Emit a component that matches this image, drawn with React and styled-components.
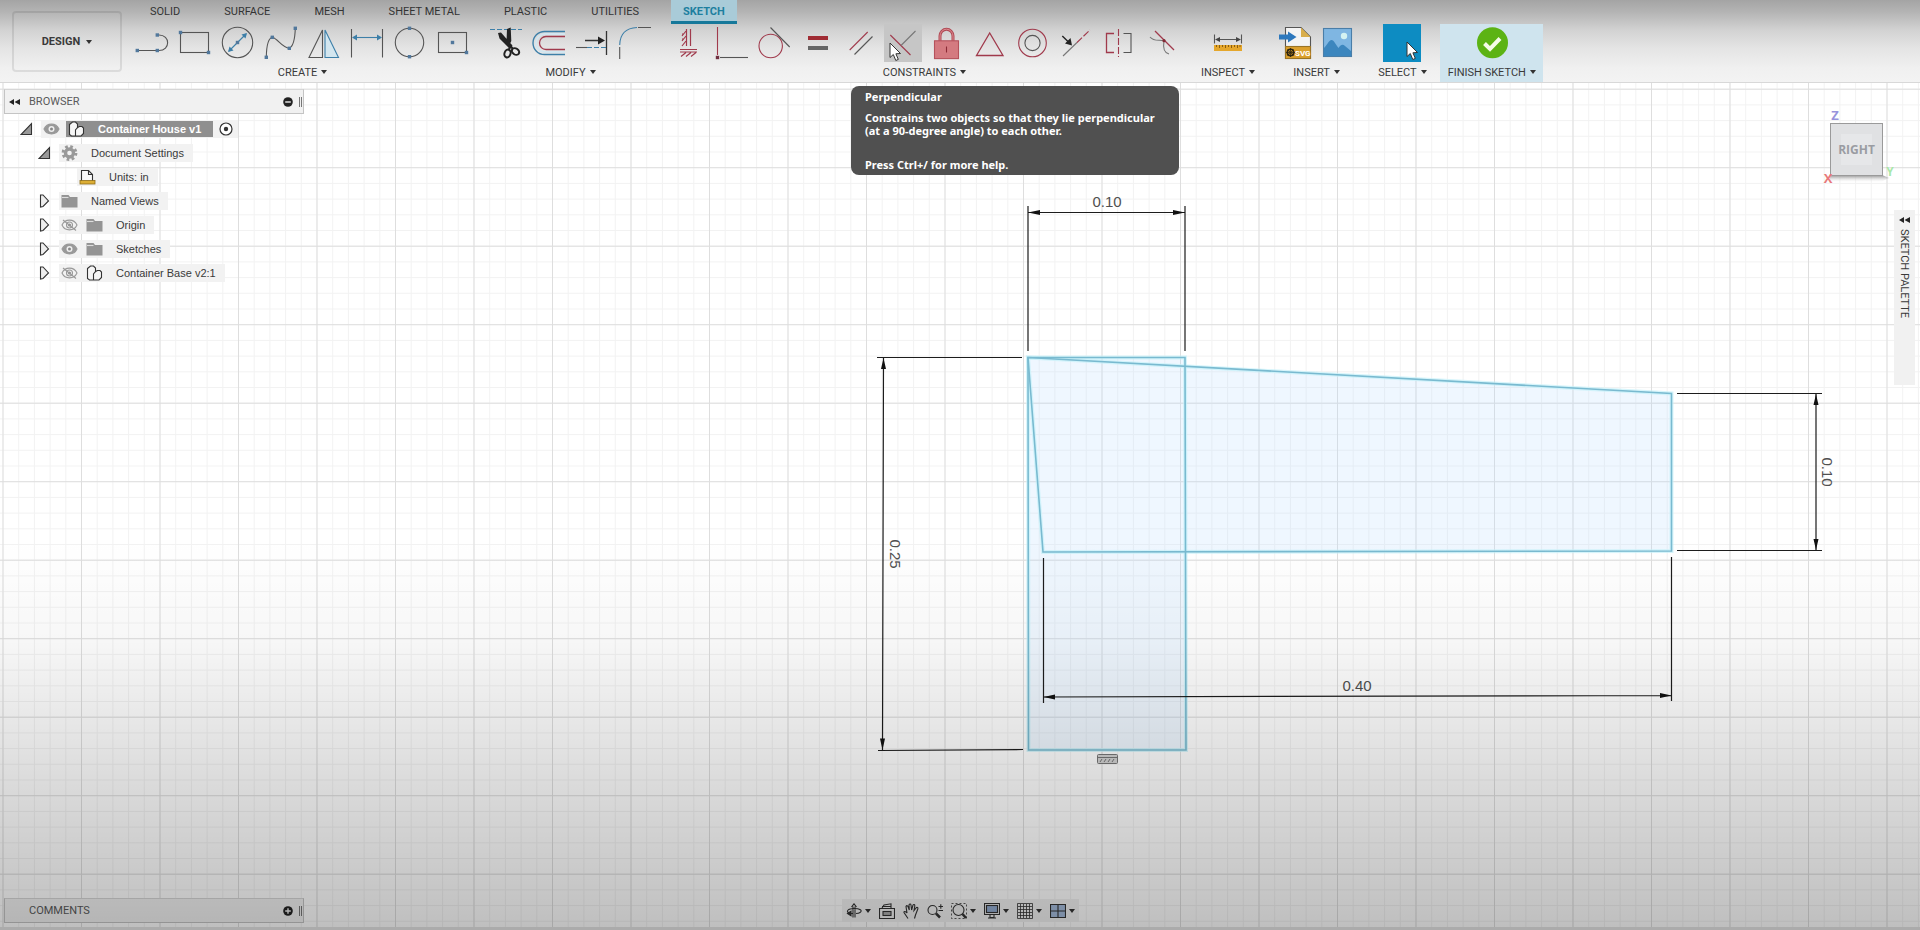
import React from "react";
import styled, { createGlobalStyle } from "styled-components";

const GlobalStyle = createGlobalStyle`
  * {
    box-sizing: border-box;
  }
  body {
    margin: 0;
    background: #ffffff;
    font-family: Roboto, "Liberation Sans", sans-serif;
    font-size: 11px;
    color: #3a3a3a;
  }
  button {
    font: inherit;
    color: inherit;
    background: none;
    border: 0;
    padding: 0;
    cursor: pointer;
  }
  svg {
    display: block;
  }
`;

const Page = styled.div`
  height: 100vh;
  display: flex;
  flex-direction: column;
  overflow: hidden;
`;

/* ---------- header ---------- */

const Header = styled.header`
  display: flex;
  padding-left: 12px;
  border-bottom: 1px solid #d8d8d8;
  background: linear-gradient(#a4a4a4 0, #b4b4b4 12px, #d2d2d2 30px, #e4e4e4 48px, #f0f0f0 68px, #f3f3f3 100%);
`;

const DesignButton = styled.button`
  width: 110px;
  height: 61px;
  margin-top: 11px;
  border: 2px solid rgba(0, 0, 0, 0.09);
  border-radius: 4px;
  display: flex;
  align-items: center;
  justify-content: center;
  gap: 6px;
  font-weight: 700;
`;

const Ribbon = styled.div`
  flex: 1;
  min-width: 0;
  padding-left: 4px;
`;

const Tabs = styled.nav`
  display: flex;
  gap: 20px;
  height: 24px;
  padding-left: 12px;
`;

const Tab = styled.button`
  padding: 2px 12px 0;
  white-space: nowrap;
  color: ${(p) => (p.$active ? "#1d7f9f" : "#333333")};
  font-weight: ${(p) => (p.$active ? 700 : 400)};
  background: ${(p) => (p.$active ? "#a9cbd8" : "none")};
  border-bottom: ${(p) => (p.$active ? "3px solid #16789a" : "3px solid transparent")};
`;

const Groups = styled.div`
  display: flex;
`;

const Group = styled.div`
  display: flex;
  flex-direction: column;
  align-items: center;
  padding: 0 ${(p) => p.$pad || 7}px;
  background: ${(p) => (p.$done ? "#cfe4ee" : "none")};
  & + & {
    border-left: 1px solid ${(p) => (p.$done ? "transparent" : "#cccccc")};
  }
`;

const Tools = styled.div`
  display: flex;
  gap: 5px;
`;

const Tool = styled.button`
  position: relative;
  width: 38px;
  height: 38px;
  background: ${(p) => (p.$fill ? p.$fill : "none")};
`;

const GroupLabel = styled.button`
  display: flex;
  align-items: center;
  gap: 4px;
  height: 20px;
  white-space: nowrap;
`;

const Caret = styled.span`
  border: 3px solid transparent;
  border-top: 4px solid #333333;
  border-bottom: 0;
`;

const Tooltip = styled.div`
  position: absolute;
  z-index: 5;
  top: 62px;
  left: -33px;
  width: 328px;
  height: 89px;
  padding: 4px 14px;
  border-radius: 8px;
  background: #505050;
  color: #ffffff;
  font: 700 11px/13px "Noto Sans", sans-serif;
  text-align: left;
  white-space: nowrap;
  p {
    margin: 0;
  }
  p + p {
    margin-top: 8px;
  }
  p:last-child {
    margin-top: 21px;
  }
`;

const Pointer = styled.svg`
  position: absolute;
  left: ${(p) => p.$x}px;
  top: ${(p) => p.$y}px;
`;

/* ---------- workspace ---------- */

const Workspace = styled.main`
  position: relative;
  flex: 1;
  min-height: 0;
  display: flex;
  flex-direction: column;
  justify-content: space-between;
  border-bottom: 3px solid #ababab;
`;

const Canvas = styled.svg`
  position: absolute;
  inset: 0;
  width: 100%;
  height: 100%;
`;

const Shade = styled.div`
  position: absolute;
  inset: 0;
  pointer-events: none;
  background: linear-gradient(
    transparent 54%,
    rgba(0, 0, 0, 0.03) 66%,
    rgba(0, 0, 0, 0.09) 75%,
    rgba(0, 0, 0, 0.15) 84%,
    rgba(0, 0, 0, 0.21) 94%,
    rgba(0, 0, 0, 0.25) 100%
  );
`;

const TopArea = styled.div`
  position: relative;
  display: flex;
  justify-content: space-between;
  padding: 6px 5px 0 4px;
`;

const Panel = styled.section`
  width: 300px;
`;

const PanelBar = styled.div`
  display: flex;
  align-items: center;
  height: 25px;
  padding: 0 1px 0 4px;
  background: #f1f1f1;
  border: 1px solid #c4c4c4;
  border-top-color: #d6d6d6;
  color: #5a5a5a;
`;

const PanelTitle = styled.h2`
  flex: 1;
  margin: 0;
  padding-left: ${(p) => p.$indent}px;
  font-size: 11px;
  font-weight: 400;
`;

const Grip = styled.span`
  width: 3px;
  height: 10px;
  margin-left: 6px;
  border-left: 1px solid #777777;
  border-right: 1px solid #777777;
`;

const Tree = styled.ul`
  list-style: none;
  margin: 3px 0 0;
  padding: 0;
  font-family: "Liberation Sans", sans-serif;
`;

const TreeRow = styled.li`
  display: flex;
  align-items: center;
  gap: 8px;
  height: 24px;
  padding-left: ${(p) => p.$indent}px;
`;

const Chip = styled.div`
  display: flex;
  align-items: center;
  gap: ${(p) => (p.$root ? 6 : 8)}px;
  height: 18px;
  padding: 0 ${(p) => (p.$root ? 5 : 9)}px 0 2px;
  background: #f2f2f2;
`;

const RowLabel = styled.span`
  padding-left: 5px;
  white-space: nowrap;
`;

const Selected = styled.span`
  display: flex;
  align-items: center;
  gap: 8px;
  height: 16px;
  padding: 0 12px 0 2px;
  background: #8f8f8f;
  color: #ffffff;
  font-weight: 700;
`;

const Side = styled.div`
  display: flex;
  align-items: flex-start;
  padding-top: 17px;
`;

const Palette = styled.button`
  display: flex;
  align-items: center;
  gap: 6px;
  width: 21px;
  height: 175px;
  margin-top: 104px;
  padding-top: 7px;
  writing-mode: vertical-rl;
  background: #f1f1f1;
`;

const BottomArea = styled.div`
  position: relative;
  display: grid;
  grid-template-columns: 1fr auto 1fr;
  align-items: center;
  padding: 0 4px 4px;
`;

const NavBar = styled.div`
  display: flex;
  align-items: center;
  gap: 8px;
  height: 23px;
  padding: 0 4px;
  background: #f1f1f1;
`;

const NavButton = styled.button`
  display: flex;
  align-items: center;
  gap: 3px;
`;

/* ---------- drawing helpers ---------- */

const INK = "#555555";
const BLUE = "#3d7fa8";
const RED = "#a03a4c";

const Dot = ({ x, y, fill = "#52789c" }) => (
  <rect x={x - 1.7} y={y - 1.7} width="3.4" height="3.4" fill={fill} />
);

const Glyph = ({ children }) => (
  <svg width="38" height="38" viewBox="0 0 38 38" fill="none" stroke={INK} strokeWidth="1.1" aria-hidden="true">
    {children}
  </svg>
);

const createTools = [
  ["Line", <>
    <path d="M4.3 26.5H24.3M26 11C37.5 11 37.5 26.5 26 26.5" />
    <g stroke="none"><Dot x={4.3} y={26.5} /><Dot x={24.3} y={26.5} /><Dot x={24.3} y={11} /></g>
  </>],
  ["Rectangle", <>
    <rect x="4.5" y="8.5" width="28" height="20" />
    <g stroke="none"><Dot x={4.5} y={8.5} /><Dot x={32.5} y={28.5} /></g>
  </>],
  ["Circle", <>
    <circle cx="18.5" cy="18.5" r="15.2" />
    <g stroke={BLUE} fill={BLUE}>
      <path d="M10 27L27 10" />
      <path d="M9 28L10.5 22.5L14.5 26.5ZM28 9L22.5 10.5L26.5 14.5Z" stroke="none" />
    </g>
    <g stroke="none"><Dot x={18.5} y={18.5} /></g>
  </>],
  ["Spline", <>
    <path d="M4.3 33C4.5 23 6.5 14 10.5 13.3C16 15 20 23.5 27.3 24.3C32 22 33 14 33.3 4.3" />
    <g stroke="none"><Dot x={4.3} y={33.3} /><Dot x={10.3} y={13.3} /><Dot x={27.3} y={24.3} /><Dot x={33.3} y={4.3} /></g>
  </>],
  ["Mirror", <>
    <path d="M17.5 6V33.5H4Z" />
    <path d="M20 6V33.5H33.5Z" stroke={BLUE} fill="#d3e6ef" />
  </>],
  ["Sketch Dimension", <>
    <path d="M3.5 5V33.5M34.5 5V33.5" />
    <path d="M5 13.5H33" stroke={BLUE} />
    <path d="M4 13.5L9 10.5V16.5ZM34 13.5L29 10.5V16.5Z" fill={BLUE} stroke="none" />
  </>],
  ["2-Point Circle", <>
    <circle cx="18.5" cy="18.5" r="14.2" />
    <g stroke="none"><Dot x={18.5} y={4.3} /><Dot x={18.5} y={32.7} /></g>
  </>],
  ["Center Rectangle", <>
    <rect x="4.5" y="8.5" width="28" height="20" />
    <g stroke="none"><Dot x={18.5} y={18.5} /><Dot x={32.5} y={28.5} /></g>
  </>],
];

const modifyTools = [
  ["Trim", <>
    <path d="M3 5.5H35" stroke={BLUE} strokeDasharray="5 2" />
    <path d="M11 9L14 8.5L25.5 21.5L22.5 24.5L12.5 14.5ZM20 5L23.7 3.5L24.3 17L21.5 23L19.5 18Z" fill="#222222" stroke="none" />
    <g stroke="#222222" strokeWidth="2">
      <ellipse cx="20.5" cy="29.5" rx="3" ry="4" transform="rotate(20 20.5 29.5)" />
      <ellipse cx="28.5" cy="27.5" rx="3" ry="4" transform="rotate(-55 28.5 27.5)" />
      <path d="M22 25.5L23.5 22L26 25" />
    </g>
  </>],
  ["Offset", <>
    <path d="M35 10H15A9 9 0 0 0 15 28H35" stroke="#d2e6f0" strokeWidth="2" />
    <path d="M35 7.5H14.5A11.5 11.5 0 0 0 14.5 30.5H35" stroke={BLUE} strokeWidth="1.4" />
    <path d="M35 12.5H16A6.5 6.5 0 0 0 16 25.5H35" stroke={RED} strokeWidth="1.3" />
  </>],
  ["Extend", <>
    <path d="M33.5 7V31M12 16.5H28" stroke="#333333" strokeWidth="1.3" />
    <path d="M32 16.5L25 12.5V20.5Z" fill="#222222" stroke="none" />
    <path d="M3 23.5H14" />
    <path d="M14 23.5H33" stroke={BLUE} strokeDasharray="5 2" />
  </>],
  ["Fillet", <>
    <path d="M3.7 35V23M22 3.5H35" />
    <path d="M3.7 21C4 10 10 4 21 3.5" stroke={BLUE} />
  </>],
];

const constraintTools = [
  ["Horizontal/Vertical", <g stroke={RED} strokeWidth="1.2">
    <path d="M17.5 5V22M21.5 5V22M17 7L13 12M17 12L13 17M17 17L13 22M13 10H15M13 15H15" />
    <path d="M11 25.5H28M11 28H28M17 28.5L12 32.5M22 28.5L17 32.5M27 28.5L22 32.5" />
  </g>],
  ["Coincident", <>
    <path d="M5.5 3V31" stroke={RED} />
    <path d="M8 33.5H36" />
    <g stroke="none"><Dot x={5.5} y={33.5} fill="#703040" /></g>
  </>],
  ["Tangent", <>
    <circle cx="15.7" cy="22" r="11.7" stroke={RED} />
    <path d="M15.5 3.5L34.7 23" />
  </>],
  ["Equal", <g stroke="none">
    <rect x="10" y="12" width="20" height="4" fill="#a02c34" />
    <rect x="10" y="22" width="20" height="4" fill="#666666" />
  </g>],
  ["Parallel", <>
    <path d="M8.7 26L26.7 8" stroke={RED} />
    <path d="M13.5 30.5L31.5 12.5" />
  </>],
  ["Perpendicular", <>
    <path d="M6.3 11L26.5 31" stroke={RED} />
    <path d="M17 21.5L31.5 7" stroke="#777777" />
  </>],
  ["Fix/UnFix", <>
    <path d="M13 17V12A6.5 6.8 0 0 1 26 12V17" stroke="#b04a55" strokeWidth="3" />
    <path d="M13 17V12A6.5 6.8 0 0 1 26 12V17" stroke="#dd8b90" strokeWidth="1" />
    <rect x="7.5" y="16.8" width="24" height="17.8" fill="#d47a80" stroke="#b5525c" />
    <path d="M19.5 22.5V28.5" stroke="#8a2a35" />
  </>],
  ["Midpoint Triangle", <path d="M6.5 31.5H33L19.7 9Z" stroke={RED} strokeWidth="1.3" />],
  ["Concentric", <>
    <circle cx="19.5" cy="19" r="13.8" stroke={RED} />
    <circle cx="19.5" cy="19" r="7.6" />
  </>],
  ["Midpoint", <>
    <path d="M7 32L21 18.5" stroke="#777777" />
    <path d="M21 18.5L34 6" stroke={RED} strokeDasharray="7 2" />
    <path d="M6.3 12L12 17.5" stroke="#222222" strokeWidth="1.4" />
    <path d="M16 21.5L14.5 14L9 19.5Z" fill="#222222" stroke="none" />
  </>],
  ["Symmetry", <>
    <path d="M15 9.5H7.5V28.5H15" stroke={RED} strokeWidth="1.3" />
    <path d="M19.5 5V33" stroke={RED} strokeDasharray="7 2" />
    <path d="M24.5 9.5H32V28.5H24.5" />
  </>],
  ["Curvature", <>
    <path d="M13 7L32 26" stroke={RED} strokeWidth="1.3" />
    <path d="M8 13C12 18 17 15.5 22 16.7C21 23 22 29 27 30" stroke="#777777" />
    <circle cx="22" cy="16.7" r="1.6" fill="#802a35" stroke="none" />
  </>],
];

const inspectTools = [
  ["Measure", <>
    <path d="M5.5 10.5V19.5M32.5 10.5V19.5M7 15.5H31" />
    <path d="M6 15.5L11 13V18ZM32 15.5L27 13V18Z" fill="#444444" stroke="none" />
    <rect x="5" y="21" width="28" height="6" fill="#e5a72c" stroke="none" />
    <path d="M7.5 21V23M10.5 21V24M13.5 21V23M16.5 21V24M19.5 21V23M22.5 21V24M25.5 21V23M28.5 21V24M31 21V23" stroke="#8a5d10" strokeWidth="1" />
  </>],
];

const insertTools = [
  ["Insert SVG", <>
    <path d="M9.5 3.5H25L34.5 13V34.5H9.5Z" fill="#f4f4f4" />
    <path d="M25 3.5V13H34.5Z" fill="#d9ae4c" stroke="none" />
    <rect x="9.5" y="22.5" width="25" height="12" fill="#dca02c" stroke="#9a7426" />
    <path d="M3 10.5H12V7.5L20.5 13L12 18.5V15.5H3Z" fill="#2d78bd" stroke="none" />
    <circle cx="14.5" cy="28.5" r="3.2" stroke="#2b2310" strokeWidth="1.6" />
    <path d="M14.5 24V33M10 28.5H19M11.5 25.5L17.5 31.5M17.5 25.5L11.5 31.5" stroke="#2b2310" strokeWidth="0.8" />
    <text x="19" y="31.5" fontFamily="Roboto, sans-serif" fontSize="8" fontWeight="700" fill="#ffffff" stroke="none">SVG</text>
  </>],
  ["Canvas", <>
    <rect x="4.5" y="4.5" width="28" height="28" fill="#7fb6e2" stroke="#4a7ea8" />
    <path d="M5 24C9 20 10 16 12.5 16C15 16 17 21 19.5 24C22 20 24 20 26 22L32 27V32H5Z" fill="#3c86be" stroke="none" />
    <circle cx="25" cy="12" r="3.2" fill="#d4f2f2" stroke="none" />
  </>],
];

const finishTools = [
  ["Finish Sketch", <>
    <circle cx="19.5" cy="18.7" r="15.5" fill="#5cb314" stroke="none" />
    <path d="M11.5 19.5L17 25L27 14.5" stroke="#f4fbe8" strokeWidth="4" />
  </>],
];

const groups = [
  { label: "CREATE", tools: createTools },
  { label: "MODIFY", tools: modifyTools },
  { label: "CONSTRAINTS", tools: constraintTools },
  { label: "INSPECT", tools: inspectTools, pad: 13 },
  { label: "INSERT", tools: insertTools },
  { label: "SELECT", tools: [["Select", null]], pad: 13 },
  { label: "FINISH SKETCH", tools: finishTools, pad: 7, done: true },
];

const tabs = ["SOLID", "SURFACE", "MESH", "SHEET METAL", "PLASTIC", "UTILITIES", "SKETCH"];

const Arrow = ({ x, y }) => (
  <Pointer $x={x} $y={y} width="13" height="20" viewBox="0 0 13 20" aria-hidden="true">
    <path d="M1 1V15.5L4.3 12.5L6.8 18.5L9.3 17.4L6.9 11.8L11.5 11.5Z" fill="#ffffff" stroke="#333333" />
  </Pointer>
);

const toolFill = (name) => {
  if (name === "Perpendicular") return "#c6c6c6";
  if (name === "Select") return "#0d8cc2";
  return null;
};

const ToolButton = ({ name, icon }) => (
  <Tool $fill={toolFill(name)} aria-label={name}>
    <Glyph>{icon}</Glyph>
    {name === "Select" && <Arrow x={23} y={17} />}
    {name === "Perpendicular" && (
      <>
        <Arrow x={5} y={18} />
        <Tooltip role="tooltip">
          <p>Perpendicular</p>
          <p>
            Constrains two objects so that they lie perpendicular
            <br />
            (at a 90-degree angle) to each other.
          </p>
          <p>Press Ctrl+/ for more help.</p>
        </Tooltip>
      </>
    )}
  </Tool>
);

/* ---------- tree icons ---------- */

const Small = ({ children, w = 17 }) => (
  <svg width={w} height="16" viewBox={`0 0 ${w} 16`} fill="none" stroke="#333333" strokeWidth="1.1" aria-hidden="true">
    {children}
  </svg>
);

const Opened = () => (
  <Small w={13}><path d="M1 13.5H11.5V2.5Z" fill="#999999" /></Small>
);

const Closed = () => (
  <Small w={13}><path d="M2.5 2V14L5 13.5L10.5 8L5 2Z" fill="#eeeeee" /></Small>
);

const Eye = ({ hidden }) => (
  <Small>
    <path d="M1 8C4 1.5 13 1.5 16 8C13 14.5 4 14.5 1 8Z" fill={hidden ? "none" : "#999999"} stroke="#999999" />
    <circle cx="8.5" cy="8" r="3" fill={hidden ? "none" : "#eeeeee"} stroke={hidden ? "#999999" : "none"} />
    <circle cx="8.5" cy="8" r="1.5" fill="#888888" stroke="none" />
    {hidden && <path d="M2 3L15 13.5" stroke="#999999" />}
  </Small>
);

const Folder = () => (
  <Small><path d="M0.5 2H7.5L9 4H16.5V14.5H0.5Z" fill="#949494" stroke="none" /><path d="M1 4.5H7.5" stroke="#dddddd" /></Small>
);

const Part = () => (
  <Small>
    <path d="M1.5 3.5L4.5 1H7.5L9.5 3V6.5L11.5 5.5H14L15.5 7V12.5L13 15H3.5L1.5 13.5Z" fill="#f6f6f6" />
    <path d="M7.5 15V9L9.5 6.5" />
  </Small>
);

const Gear = () => (
  <Small>
    <circle cx="8.5" cy="8" r="4" stroke="#999999" strokeWidth="3.4" />
    <circle cx="8.5" cy="8" r="6.4" stroke="#999999" strokeWidth="3" strokeDasharray="2.6 2.42" />
  </Small>
);

const Units = () => (
  <Small>
    <path d="M2.5 12V1.5H9.5L13.5 5.5V12" fill="#fafafa" />
    <path d="M9.5 1.5V5.5H13.5" />
    <rect x="1" y="11.5" width="15" height="3.5" fill="#dcae35" stroke="#8f6d17" strokeWidth="0.8" />
  </Small>
);

const DoubleArrow = () => (
  <svg width="11" height="6" viewBox="0 0 11 6" aria-hidden="true">
    <path d="M5 0V6L0 3ZM11 0V6L5.5 3Z" fill="#222222" />
  </svg>
);

const Round = ({ plus }) => (
  <svg width="10" height="10" viewBox="0 0 10 10" aria-hidden="true">
    <circle cx="5" cy="5" r="4.8" fill="#222222" />
    <path d={plus ? "M2.2 5H7.8M5 2.2V7.8" : "M2.2 5H7.8"} stroke="#eeeeee" strokeWidth="1.4" />
  </svg>
);

const rows = [
  { label: "Document Settings", indent: 34, arrow: <Opened />, icons: [<Gear key="g" />] },
  { label: "Units: in", indent: 73, icons: [<Units key="u" />] },
  { label: "Named Views", indent: 34, arrow: <Closed />, icons: [<Folder key="f" />] },
  { label: "Origin", indent: 34, arrow: <Closed />, icons: [<Eye key="e" hidden />, <Folder key="f" />] },
  { label: "Sketches", indent: 34, arrow: <Closed />, icons: [<Eye key="e" />, <Folder key="f" />] },
  { label: "Container Base v2:1", indent: 34, arrow: <Closed />, icons: [<Eye key="e" hidden />, <Part key="p" />] },
];

const BrowserPanel = () => (
  <Panel>
    <PanelBar>
      <DoubleArrow />
      <PanelTitle $indent={9}>BROWSER</PanelTitle>
      <button aria-label="Collapse browser"><Round /></button>
      <Grip />
    </PanelBar>
    <Tree>
      <TreeRow $indent={16}>
        <Opened />
        <Chip $root>
          <Eye />
          <Selected>
            <Part />
            <RowLabel>Container House v1</RowLabel>
          </Selected>
          <svg width="14" height="14" viewBox="0 0 14 14" aria-hidden="true">
            <circle cx="7" cy="7" r="6" fill="#ffffff" stroke="#333333" strokeWidth="1.2" />
            <circle cx="7" cy="7" r="2.2" fill="#333333" />
          </svg>
        </Chip>
      </TreeRow>
      {rows.map((row) => (
        <TreeRow key={row.label} $indent={row.indent}>
          {row.arrow}
          <Chip>
            {row.icons}
            <RowLabel>{row.label}</RowLabel>
          </Chip>
        </TreeRow>
      ))}
    </Tree>
  </Panel>
);

const ViewCube = () => (
  <svg width="74" height="82" viewBox="-1 0 74 82" fontFamily="Open Sans, sans-serif" fontWeight="700" aria-label="View cube">
    <defs>
      <linearGradient id="cubeShadow" x1="0" y1="0" x2="0" y2="1">
        <stop offset="0" stopColor="#8c8c8c" />
        <stop offset="1" stopColor="#e8e8e8" stopOpacity="0" />
      </linearGradient>
    </defs>
    <path d="M9 69H61L68 72L60 76H9Z" fill="url(#cubeShadow)" />
    <rect x="9.5" y="17.5" width="52" height="52" fill="#e0e1e3" stroke="#9a9a9a" />
    <rect x="20" y="28" width="31" height="31" fill="#e6e7e9" />
    <text x="35.5" y="48" fontSize="12" textAnchor="middle" fill="#9a9ca2">RIGHT</text>
    <text x="14" y="14" fontSize="13" textAnchor="middle" fill="#9893dc">Z</text>
    <text x="7" y="77" fontSize="13" textAnchor="middle" fill="#e8797b">X</text>
    <text x="69" y="70" fontSize="12" textAnchor="middle" fill="#a9e8a9">Y</text>
  </svg>
);

/* ---------- sketch ---------- */

const Dimension = ({ d, arrows, label, x, y, turned }) => (
  <g>
    <path d={d} stroke="#1c1c1c" strokeWidth="1.2" fill="none" />
    <path d={arrows} fill="#111111" />
    <text x={x} y={y} fontSize="15" textAnchor="middle" fill="#505050" transform={turned ? `rotate(90 ${x} ${y})` : undefined}>
      {label}
    </text>
  </g>
);

const Sketch = () => (
  <Canvas viewBox="0 83 1920 844" preserveAspectRatio="xMidYMid slice" fontFamily="Liberation Sans, sans-serif">
    <defs>
      <pattern id="minor" x="2.5" y="10.2" width="15.7" height="15.7" patternUnits="userSpaceOnUse">
        <path d="M0.5 0V15.7M0 0.5H15.7" stroke="#f2f2f2" fill="none" />
      </pattern>
      <pattern id="major" x="2.5" y="10.2" width="78.5" height="78.5" patternUnits="userSpaceOnUse">
        <path d="M0.5 0V78.5M0 0.5H78.5" stroke="#dedede" fill="none" />
      </pattern>
    </defs>
    <rect y="0" width="1920" height="1010" fill="#ffffff" />
    <rect y="0" width="1920" height="1010" fill="url(#minor)" />
    <rect y="0" width="1920" height="1010" fill="url(#major)" />
    <path d="M1028 357.5H1185V365.5L1671.5 393.5V551L1185.5 551.5L1186 750H1028.5Z" fill="#b4daff" fillOpacity="0.22" />
    <g fill="none" stroke="#c6f1fa" strokeOpacity="0.7" strokeWidth="4">
      <path d="M1028 357.5H1185L1186 750H1028.5Z" />
      <path d="M1028 357.5L1671.5 393.5V551L1043 552Z" />
    </g>
    <g fill="none" stroke="#79bad0" strokeWidth="1.6">
      <path d="M1028 357.5H1185L1186 750H1028.5Z" />
      <path d="M1028 357.5L1671.5 393.5V551L1043 552Z" />
    </g>
    <Dimension
      label="0.10" x={1107} y={207}
      d="M1028 206V351M1185 206V351M1028 212.5H1185"
      arrows="M1028 212.5L1040 210V215ZM1185 212.5L1173 210V215Z"
    />
    <Dimension
      label="0.25" x={890} y={554} turned
      d="M877 357.5H1022M878 750.5L1023 749.5M883.5 358L882.5 750"
      arrows="M883.5 358L881 369H886ZM882.5 750L880 738.5H885Z"
    />
    <Dimension
      label="0.40" x={1357} y={691}
      d="M1043.5 558V703M1671.5 557V701M1043.5 697L1671.5 695.5"
      arrows="M1043.5 697L1055 694.5V699.5ZM1671.5 695.5L1660 693V698Z"
    />
    <Dimension
      label="0.10" x={1822} y={472} turned
      d="M1677 393.5H1822M1677 550.5H1822M1816 393.5V550.5"
      arrows="M1816 394L1813.5 405H1818.5ZM1816 550L1813.5 539H1818.5Z"
    />
    <g stroke="#777777" fill="#d2d2d2">
      <rect x="1097.5" y="754.5" width="20" height="9" rx="1" />
      <path d="M1098 757.5H1117M1100 762L1102 759M1104 762L1106 759M1108 762L1110 759M1112 762L1114 759" />
    </g>
  </Canvas>
);

/* ---------- navigation bar ---------- */

const navItems = [
  ["Orbit", true, <>
    <path d="M4 10.5C-1 8.5 2 5.5 8 5.5C14 5.5 17 7.5 14 9.5C13 10.3 11.5 10.5 10 10.5M2 10.5H7M7 14.5V3.5M9 14.5V3.5M5.5 4L8 0.8L10.5 4" />
    <path d="M1.5 10.5L5 8.3V12.7Z" fill="#333333" />
  </>],
  ["Look At", false, <>
    <path d="M0.5 5.5H15.5V15.5H0.5ZM3 5L5 2L12 0.8V5M3 3.5H12" />
    <rect x="4" y="8.5" width="8" height="4" fill="#aaaaaa" />
  </>],
  ["Pan", false, <path d="M5 15.500L1 9.500C0.800 8 2.500 8 4 10L3 3.500C3.500 2.300 4.700 2.500 5 3.500L6.300 7L6 2C6.500 0.700 7.800 0.800 8 2L8.600 7L10 2C10.700 1 12 1.500 11.800 3L11 7.500L13.500 4.500C14.500 4 15.200 5 14.800 6L12.500 12L11.500 15.500" fill="#eeeeee" />],
  ["Zoom", false, <>
    <circle cx="5.5" cy="7" r="4.5" />
    <path d="M9 10.5L13 14.5" strokeWidth="2.5" /><path d="M11.500 3.500H16M13.800 1.200V5.800M11.500 7.500H16" />
  </>],
  ["Zoom Window", true, <>
    <path d="M0.500 0.500H15.500V15.500H0.500Z" strokeDasharray="2 2" strokeWidth="0.8" />
    <circle cx="7.5" cy="7" r="5.5" fill="#eeeeee" /><path d="M11.5 11L15 15" strokeWidth="2.5" />
  </>],
  ["Display Settings", true, <>
    <path d="M0.5 0.5H15.5V11.5H0.5ZM6 12V14.5H10V12M4 15H12" fill="#eeeeee" />
    <rect x="2.5" y="2.5" width="11" height="7" fill="#93acd0" />
  </>],
  ["Grid and Snaps", true, <path d="M0.5 0.5H15.5V15.5H0.5ZM3.5 1V15M6.5 1V15M9.5 1V15M12.5 1V15M1 3.5H15M1 6.5H15M1 9.5H15M1 12.5H15" strokeWidth="0.8" />],
  ["Viewports", true, <path d="M0.5 1.5H15.5V14.5H0.5ZM8 2V14M1 8H15" fill="#a4bbdb" />],
];

export default function App() {
  return (
    <Page>
      <GlobalStyle />
      <Header>
        <DesignButton>
          DESIGN <Caret />
        </DesignButton>
        <Ribbon>
          <Tabs>
            {tabs.map((tab) => (
              <Tab key={tab} $active={tab === "SKETCH"}>{tab}</Tab>
            ))}
          </Tabs>
          <Groups>
            {groups.map((group) => (
              <Group key={group.label} $pad={group.pad} $done={group.done}>
                <Tools>
                  {group.tools.map(([name, icon]) => (
                    <ToolButton key={name} name={name} icon={icon} />
                  ))}
                </Tools>
                <GroupLabel>
                  {group.label} <Caret />
                </GroupLabel>
              </Group>
            ))}
          </Groups>
        </Ribbon>
      </Header>
      <Workspace>
        <Sketch />
        <TopArea>
          <BrowserPanel />
          <Side>
            <ViewCube />
            <Palette><DoubleArrow />SKETCH PALETTE</Palette>
          </Side>
        </TopArea>
        <BottomArea>
          <Panel>
            <PanelBar>
              <PanelTitle $indent={20}>COMMENTS</PanelTitle>
              <button aria-label="Add comment"><Round plus /></button>
              <Grip />
            </PanelBar>
          </Panel>
          <NavBar>
            {navItems.map(([name, menu, icon]) => (
              <NavButton key={name} aria-label={name}>
                <Small w={16}>{icon}</Small>
                {menu && <Caret />}
              </NavButton>
            ))}
          </NavBar>
        </BottomArea>
        <Shade />
      </Workspace>
    </Page>
  );
}
